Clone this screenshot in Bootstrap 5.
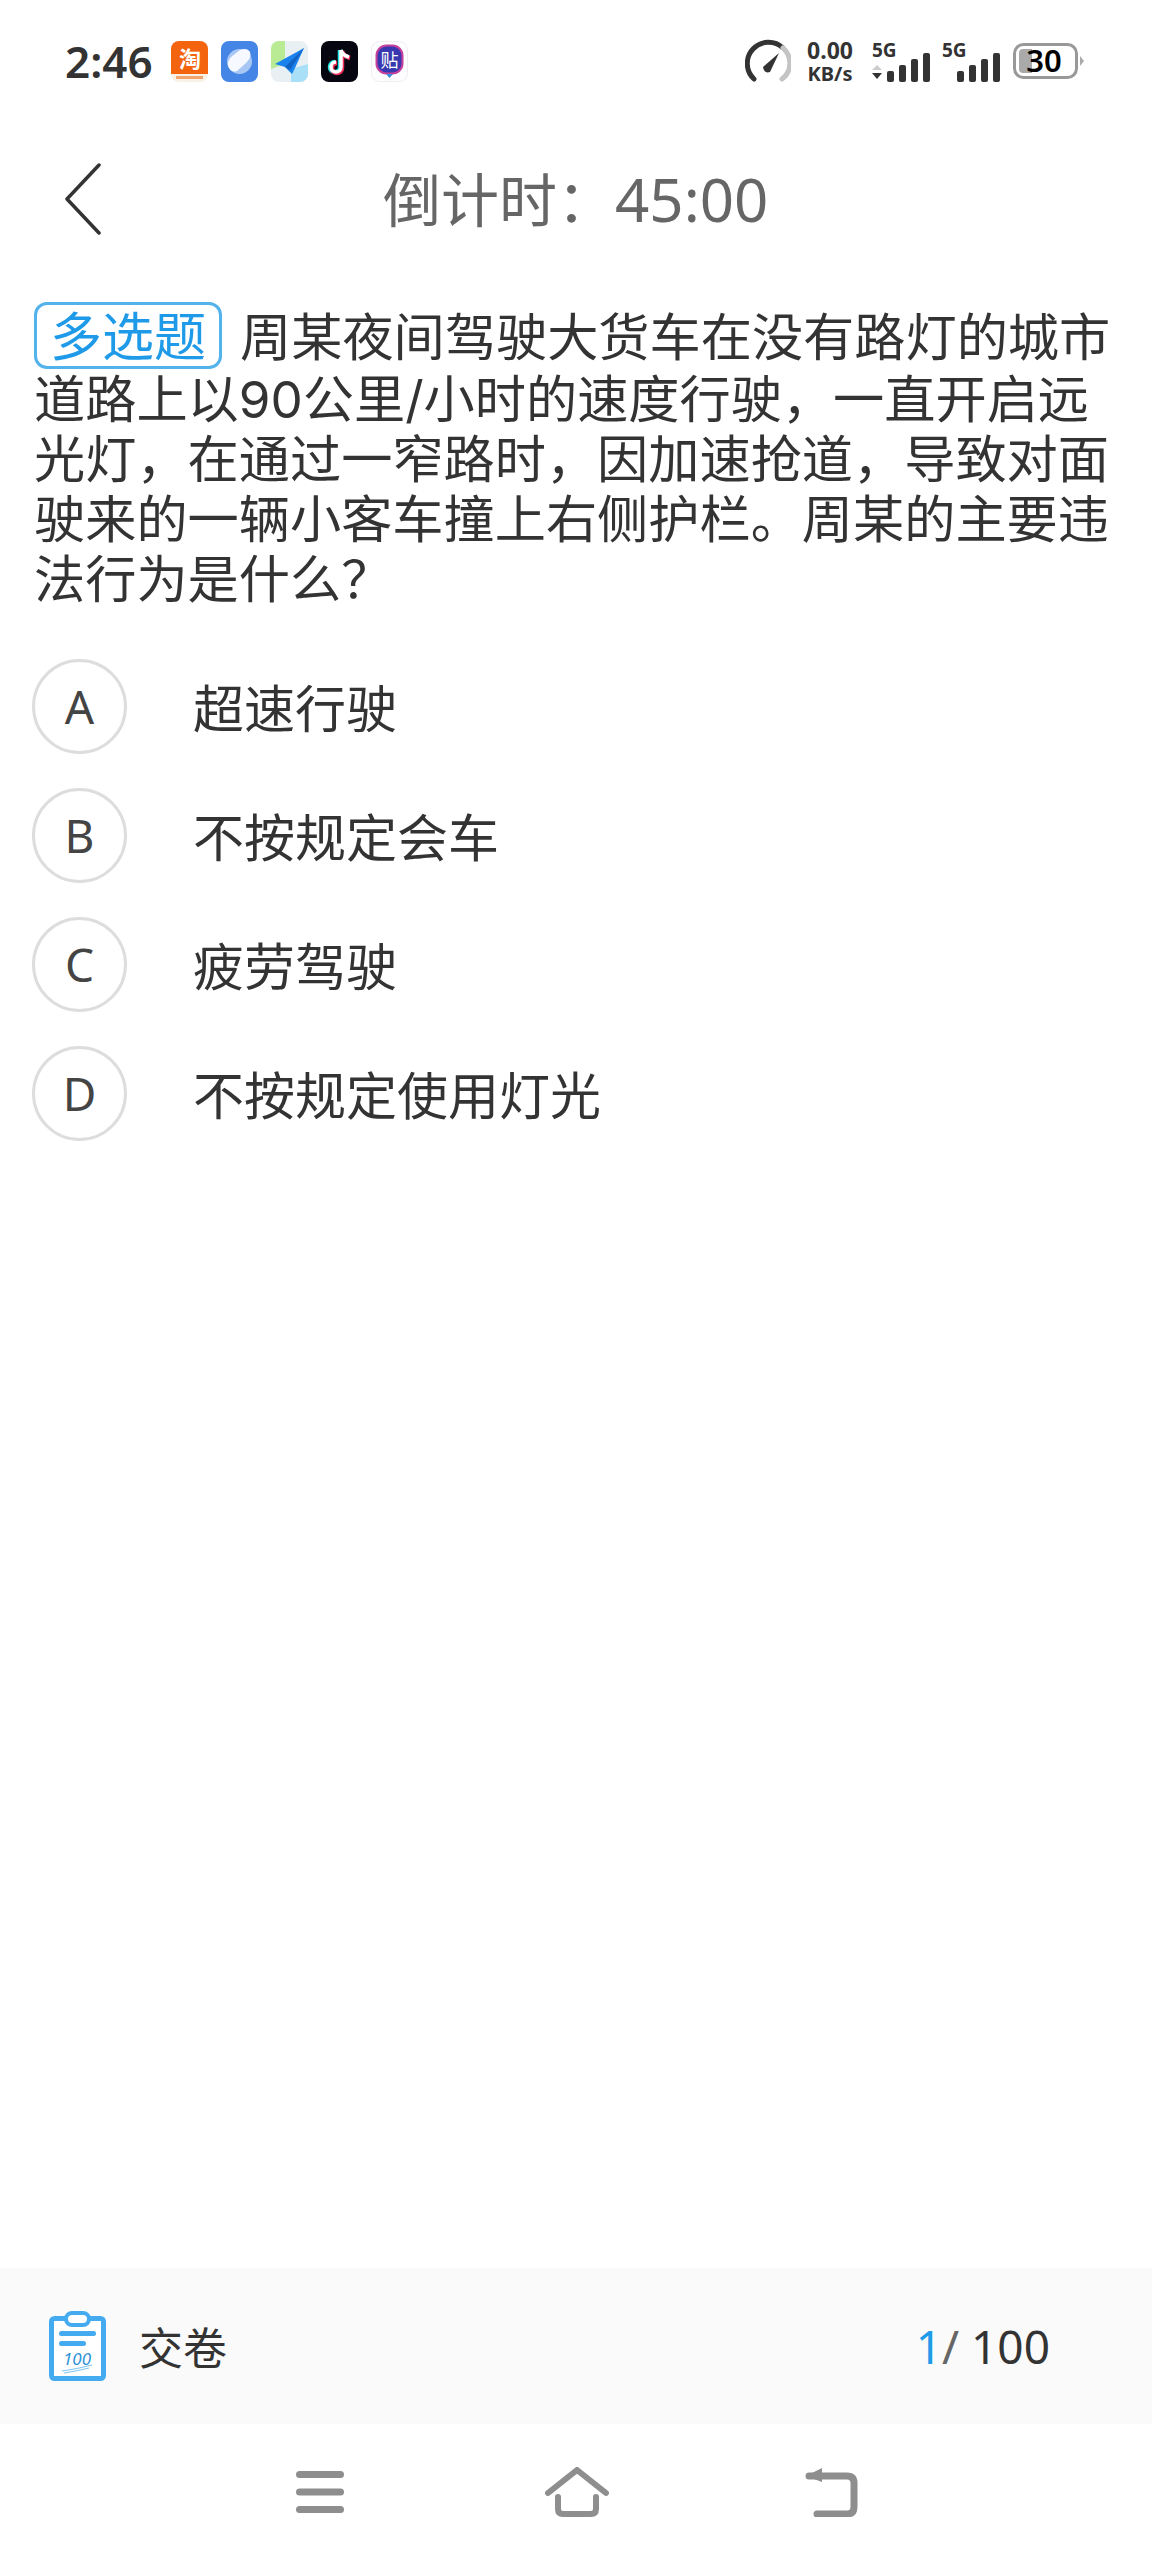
<!DOCTYPE html>
<html lang="zh-CN">
<head>
  <meta charset="UTF-8">
  <meta name="viewport" content="width=device-width, initial-scale=1.0">
  <title>倒计时</title>
  <link href="https://cdn.jsdelivr.net/npm/bootstrap@5.3.3/dist/css/bootstrap.min.css" rel="stylesheet">
  <style>
    body { font-family: "Noto Sans CJK SC", "Noto Sans", sans-serif; color: #333; background: #fff; }
    .status-row { height: 122px; padding: 0 67px 0 65px; }
    .status-time { font-family: "Noto Sans", sans-serif; font-size: 44px; font-weight: 600; color: #333; line-height: 1; }
    .app-icons { gap: 13px; margin-left: 18px; }
    .app-icons svg { width: 37px; height: 41px; display: block; }
    .status-right { gap: 8px; }
    .gauge-icon { margin-right: 7px; }
    .speed-text { font-family: "Noto Sans", sans-serif; font-weight: 700; color: #333; text-align: center; line-height: 1; width: 48px; margin-right: 10px; white-space: nowrap; }
    .speed-num { font-size: 23px; }
    .speed-unit { font-size: 20px; margin-top: 2px; }
    .sig-two { margin-left: 2px; }
    .batt-icon { margin-left: 3px; }
    .header-row { height: 153px; padding-left: 65px; }
    .exam-title { font-size: 58px; color: #666; line-height: 1; margin-left: 282px; white-space: nowrap; }
    .exam-title .clock { font-family: "Noto Sans", sans-serif; font-size: 60px; }
    .question { font-family: Inter, "Noto Sans CJK SC", sans-serif; font-size: 51.2px; line-height: 60px; padding: 27px 34px 0; color: #333; }
    .q-tag { display: inline-block; height: 67px; line-height: 60px; font-size: 52px; padding: 3px 13px 0; margin-right: 18px; border: 3px solid #52b2ec; border-radius: 13px; color: #1e9ae8; }
    .answers { padding: 0 32px; margin-top: 50px; gap: 34px; }
    .answer-dot { width: 95px; height: 95px; border: 3px solid #ddd; border-radius: 50%; font-family: "Noto Sans", sans-serif; font-size: 46px; color: #444; flex-shrink: 0; }
    .answer-text { font-size: 51px; line-height: 1; margin-left: 66px; color: #333; }
    .exam-footer { height: 156px; background: #fafafa; padding: 0 102px 0 49px; }
    .hand-in { font-size: 44px; color: #333; margin-left: 33px; }
    .progress-text { font-family: "Noto Sans", sans-serif; font-size: 46px; color: #333; }
    .progress-text .now { color: #1e9ae8; }
    .progress-text .sep { color: #666; }
    .nav-strip { height: 136px; }
    .nav-strip svg { display: block; }
    .nav-menu { margin-left: 295px; }
    .nav-home { margin-left: 200px; }
    .nav-back { margin-left: 195px; }
  </style>
</head>
<body>
  <div class="vh-100 d-flex flex-column overflow-hidden">

    <div class="status-row d-flex align-items-center justify-content-between">
      <div class="d-flex align-items-center">
        <span class="status-time">2:46</span>
        <div class="app-icons d-flex align-items-center">
          <svg viewBox="0 0 37 41">
            <rect width="37" height="41" rx="8" fill="#f8f1e8"/>
            <path d="M0 8a8 8 0 0 1 8-8h21a8 8 0 0 1 8 8v25H0z" fill="#f4640f"/>
            <text x="19" y="26" font-size="22" fill="#fff" text-anchor="middle" font-family="Noto Sans CJK SC" font-weight="700">淘</text>
            <rect x="5" y="35" width="27" height="3" fill="#f3a36e"/>
          </svg>
          <svg viewBox="0 0 37 41">
            <rect width="37" height="41" rx="8" fill="#4585e6"/>
            <circle cx="18.500" cy="20.500" r="12.500" fill="#a9c7f4"/>
            <path d="M8 27Q5 22 10 16L19 9Q26 6 29 11Q31 16 25 22L16 30Q11 32 8 27z" fill="#f6f9ff"/>
          </svg>
          <svg viewBox="0 0 37 41">
            <rect width="37" height="41" rx="8" fill="#e8f0f3"/>
            <path d="M0 8a8 8 0 0 1 8-8h6v23L0 28z" fill="#b9ea94"/>
            <path d="M20 41v-13l17-5v10a8 8 0 0 1-8 8z" fill="#a9e0f8"/>
            <path d="M33 7 L4 23 L14 26 L21 33 L24 27z" fill="#1a82ec"/>
            <path d="M14 26 L33 7 L19 29z" fill="#0f63c4"/>
          </svg>
          <svg viewBox="0 0 37 41">
            <rect width="37" height="41" rx="8" fill="#05060f"/>
            <path d="M20 9v17a5 5 0 1 1-5-5M20 9c1 4 4 6 8 7" fill="none" stroke="#25e6e6" stroke-width="4.500" transform="translate(-1 0)"/>
            <path d="M20 9v17a5 5 0 1 1-5-5M20 9c1 4 4 6 8 7" fill="none" stroke="#f0305a" stroke-width="4.500" transform="translate(1 1)"/>
            <path d="M20 9v17a5 5 0 1 1-5-5M20 9c1 4 4 6 8 7" fill="none" stroke="#fff" stroke-width="3.500"/>
          </svg>
          <svg viewBox="0 0 37 41">
            <rect x=".5" y=".5" width="36" height="40" rx="8" fill="#fdfcff" stroke="#eee"/>
            <rect x="5.500" y="4.500" width="26" height="28" rx="10" fill="#3838b0" stroke="#c4409c" stroke-width="2"/>
            <path d="M15 33h7l-3.500 4z" fill="#3a8ae0"/>
            <text x="18.500" y="26" font-size="18" fill="#fff" text-anchor="middle" font-family="Noto Sans CJK SC">贴</text>
          </svg>
        </div>
      </div>
      <div class="status-right d-flex align-items-center">
        <svg class="gauge-icon" width="46" height="44" viewBox="0 0 46 44">
          <path d="M9 40A20 20 0 0 1 38 9" fill="none" stroke="#333" stroke-width="5" stroke-linecap="round"/>
          <path d="M38 9A20 20 0 0 1 37 40" fill="none" stroke="#c4c4c4" stroke-width="5" stroke-linecap="round"/>
          <path d="M18 28L34 14L25 33Q19 35 18 28z" fill="#333"/>
        </svg>
        <div class="speed-text">
          <div class="speed-num">0.00</div>
          <div class="speed-unit">KB/s</div>
        </div>
        <svg width="60" height="52" viewBox="0 -4 60 52">
          <text x="0" y="18" font-size="19" font-weight="700" fill="#333" font-family="Noto Sans">5G</text>
          <path d="M0 31L5 26L10 31z" fill="#ccc"/>
          <path d="M0 34L5 40L10 34z" fill="#333"/>
          <rect x="15" y="32" width="7" height="11" rx="2" fill="#333"/>
          <rect x="27" y="26" width="7" height="17" rx="2" fill="#333"/>
          <rect x="39" y="20" width="7" height="23" rx="2" fill="#333"/>
          <rect x="51" y="14" width="7" height="29" rx="2" fill="#333"/>
        </svg>
        <svg class="sig-two" width="60" height="52" viewBox="0 -4 60 52">
          <text x="0" y="18" font-size="19" font-weight="700" fill="#333" font-family="Noto Sans">5G</text>
          <rect x="15" y="32" width="7" height="11" rx="2" fill="#333"/>
          <rect x="27" y="26" width="7" height="17" rx="2" fill="#333"/>
          <rect x="39" y="20" width="7" height="23" rx="2" fill="#333"/>
          <rect x="51" y="14" width="7" height="29" rx="2" fill="#333"/>
        </svg>
        <svg class="batt-icon" width="72" height="44" viewBox="0 0 72 44">
          <rect x="1.500" y="5.500" width="62" height="33" rx="9" fill="#fff" stroke="#999" stroke-width="3"/>
          <path d="M6 14a4 4 0 0 1 4-4h9v24h-9a4 4 0 0 1-4-4z" fill="#aaa"/>
          <text x="31" y="33" font-size="31" font-weight="600" fill="#000" text-anchor="middle" font-family="Noto Sans">30</text>
          <path d="M67 17L71 22L67 27z" fill="#aaa"/>
        </svg>
      </div>
    </div>

    <div class="header-row d-flex align-items-center">
      <svg width="36" height="72" viewBox="0 0 36 72">
        <path d="M34 2L2 36L34 70" fill="none" stroke="#333" stroke-width="3.500" stroke-linecap="round" stroke-linejoin="round"/>
      </svg>
      <div class="exam-title">倒计时：<span class="clock">45:00</span></div>
    </div>

    <div class="question"><span class="q-tag">多选题</span>周某夜间驾驶大货车在没有路灯的城市道路上以90公里/小时的速度行驶，一直开启远光灯，在通过一窄路时，因加速抢道，导致对面驶来的一辆小客车撞上右侧护栏。周某的主要违法行为是什么？</div>

    <div class="answers d-flex flex-column">
      <div class="d-flex align-items-center">
        <div class="answer-dot d-flex align-items-center justify-content-center">A</div>
        <div class="answer-text">超速行驶</div>
      </div>
      <div class="d-flex align-items-center">
        <div class="answer-dot d-flex align-items-center justify-content-center">B</div>
        <div class="answer-text">不按规定会车</div>
      </div>
      <div class="d-flex align-items-center">
        <div class="answer-dot d-flex align-items-center justify-content-center">C</div>
        <div class="answer-text">疲劳驾驶</div>
      </div>
      <div class="d-flex align-items-center">
        <div class="answer-dot d-flex align-items-center justify-content-center">D</div>
        <div class="answer-text">不按规定使用灯光</div>
      </div>
    </div>

    <div class="flex-grow-1"></div>

    <div class="exam-footer d-flex align-items-center justify-content-between">
      <div class="d-flex align-items-center">
        <svg width="57" height="70" viewBox="0 0 57 70">
          <rect x="2.500" y="7.500" width="52" height="60" rx="3" fill="#fff" stroke="#45abf0" stroke-width="5"/>
          <rect x="17" y="2" width="23" height="12" rx="6" fill="#fff" stroke="#45abf0" stroke-width="4"/>
          <rect x="10" y="20" width="37" height="5" rx="2.500" fill="#45abf0"/>
          <rect x="10" y="30" width="27" height="5" rx="2.500" fill="#45abf0"/>
          <text x="28" y="54" font-size="17" font-style="italic" fill="#2f93d8" text-anchor="middle" font-family="Noto Sans">100</text>
          <path d="M13 60Q28 58 43 54M15 62Q28 60 40 57" fill="none" stroke="#7cc4f2" stroke-width="1"/>
        </svg>
        <span class="hand-in">交卷</span>
      </div>
      <div class="progress-text"><span class="now">1</span><span class="sep">/</span> 100</div>
    </div>

    <div class="nav-strip d-flex align-items-center">
      <svg class="nav-menu" width="50" height="44" viewBox="0 0 50 44">
        <rect x="1" y="1" width="48" height="7" rx="3.500" fill="#8e8e8e"/>
        <rect x="1" y="18.500" width="48" height="7" rx="3.500" fill="#8e8e8e"/>
        <rect x="1" y="36" width="48" height="7" rx="3.500" fill="#8e8e8e"/>
      </svg>
      <svg class="nav-home" width="64" height="50" viewBox="0 0 64 50">
        <path d="M3 26L32 3L61 26" fill="none" stroke="#8e8e8e" stroke-width="6" stroke-linecap="round" stroke-linejoin="round"/>
        <path d="M13 30V42Q13 47 18 47H46Q51 47 51 42V30" fill="none" stroke="#8e8e8e" stroke-width="6" stroke-linecap="round"/>
      </svg>
      <svg class="nav-back" width="54" height="50" viewBox="0 0 54 50">
        <path d="M5 9H43Q50 9 50 16V40Q50 47 43 47H13" fill="none" stroke="#8e8e8e" stroke-width="7" stroke-linecap="round"/>
        <path d="M2 9L18 1V15z" fill="#8e8e8e"/>
      </svg>
    </div>
  </div>
  <script src="https://cdn.jsdelivr.net/npm/bootstrap@5.3.3/dist/js/bootstrap.bundle.min.js"></script>
</body>
</html>
